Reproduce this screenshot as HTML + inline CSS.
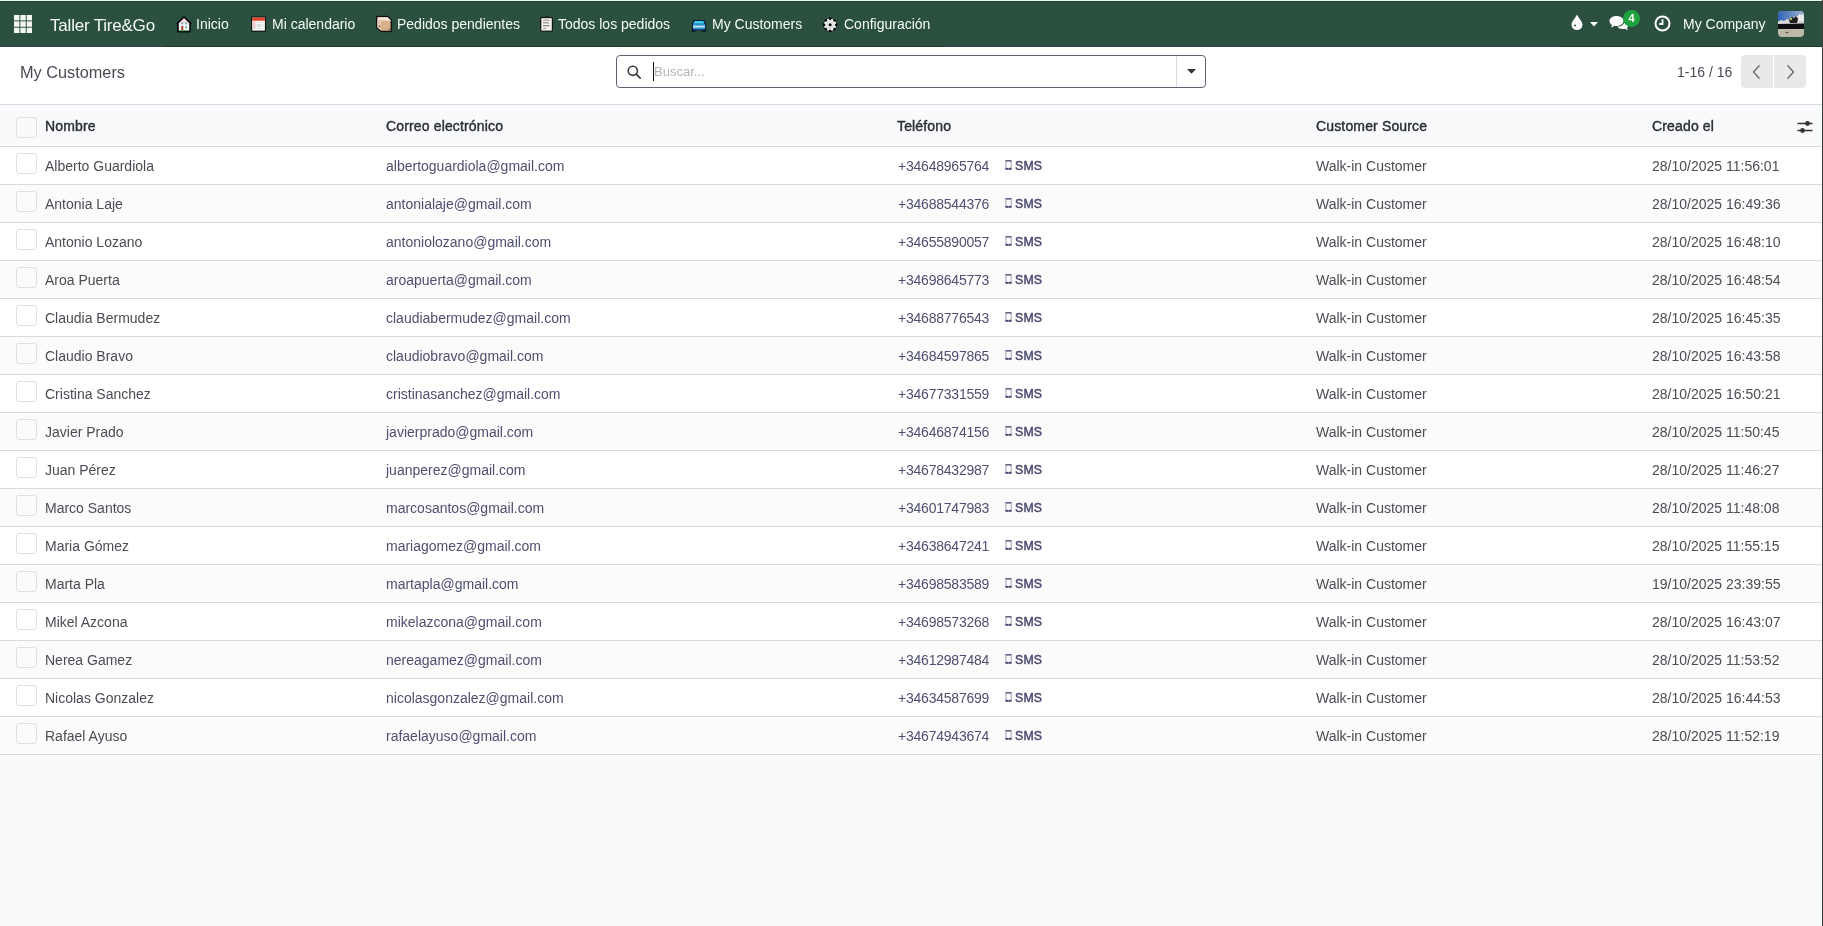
<!DOCTYPE html>
<html><head><meta charset="utf-8"><title>My Customers</title>
<style>
*{box-sizing:border-box}
html,body{margin:0;padding:0}
body{width:1823px;height:926px;position:relative;overflow:hidden;-webkit-font-smoothing:antialiased;background:#f9fafb;font-family:"Liberation Sans",sans-serif;font-size:14px;color:#374151}
.topline{position:absolute;left:0;top:0;width:1823px;height:1px;background:#e2f6ea}
.nav{position:absolute;left:0;top:1px;width:1822px;height:46px;background:#2b5040;border-top:1px solid #26443a;border-bottom:1px solid #36444a;color:#fff}
.nav .t{position:absolute;white-space:nowrap;line-height:20px;top:12px;font-size:14px;color:#f4fbf6}
.brand{font-size:17px !important;letter-spacing:-0.2px;top:14px !important}
.ico{position:absolute}
.cp{position:absolute;left:0;top:47px;width:1822px;height:58px;background:#fff;border-bottom:1px solid #dadbde}
.title{position:absolute;left:20px;top:15px;font-size:16.3px;line-height:20px;color:#474c54;white-space:nowrap}
.search{position:absolute;left:616px;top:8px;width:590px;height:33px;border:1px solid #625f70;border-radius:4px;background:#fff}
.search .sep{position:absolute;left:559px;top:0;width:1px;height:31px;background:#d8dadd}
.ph-text{position:absolute;left:37px;top:7px;color:#b3b4ba;font-size:13px;line-height:18px}
.caret{position:absolute;left:36px;top:6px;width:1px;height:19px;background:#111}
.pager-t{position:absolute;left:1677px;top:15px;line-height:20px;color:#454b54;white-space:nowrap}
.pbtn{position:absolute;top:8px;width:32px;height:33px;background:#e8e9eb}
.thead{position:absolute;left:0;top:105px;width:1822px;height:42px;background:#f9fafb;border-bottom:1px solid #dadbde}
.thead .h{position:absolute;top:1px;line-height:41px;font-weight:400;-webkit-text-stroke:0.4px #2a2d33;letter-spacing:0.15px;color:#2a2d33;white-space:nowrap}
.cb{position:absolute;left:16px;width:21px;height:21px;border:1px solid #dfe0e2;border-radius:3px;background:transparent}
.row{position:absolute;left:0;width:1822px;height:38px;border-bottom:1px solid #dadbde}
.row.odd{background:#fff}
.row.even{background:#fbfbfc}
.row .cb{top:6px}
.row .c{position:absolute;top:0px;line-height:38px;white-space:nowrap}
.name{left:45px;color:#4a4d53}
.email{left:386px;color:#4f4f70}
.phone{left:898px;color:#4f4f70;letter-spacing:-0.22px}
.src{left:1316px;color:#4a4d53}
.date{left:1652px;color:#4a4d53}
.sms{position:absolute;left:1005px;top:0px;line-height:38px;font-size:12.3px;font-weight:400;-webkit-text-stroke:0.45px #4a4870;letter-spacing:0.2px;color:#4a4870;white-space:nowrap}
.sms .ph{display:inline-block;vertical-align:0px;margin-right:3px}
.rborder{position:absolute;left:1822px;top:0;width:1px;height:926px;background:#3c3f3f}
</style></head>
<body><div id="wrap" style="position:absolute;left:0;top:0;width:1823px;height:926px;will-change:transform">
<div class="topline"></div>
<div class="nav">
  <svg class="ico" style="left:14px;top:13px" width="18.1" height="18.1" viewBox="0 0 18.1 18.1"><g fill="#f4f7f0"><rect x="0" y="0" width="5.4" height="5.4"/><rect x="6.35" y="0" width="5.4" height="5.4"/><rect x="12.7" y="0" width="5.4" height="5.4"/><rect x="0" y="6.35" width="5.4" height="5.4"/><rect x="6.35" y="6.35" width="5.4" height="5.4"/><rect x="12.7" y="6.35" width="5.4" height="5.4"/><rect x="0" y="12.7" width="5.4" height="5.4"/><rect x="6.35" y="12.7" width="5.4" height="5.4"/><rect x="12.7" y="12.7" width="5.4" height="5.4"/></g></svg>
  <span class="t brand" style="left:50px">Taller Tire&amp;Go</span>
  <!-- house -->
  <svg class="ico" style="left:174px;top:11px" width="20" height="20" viewBox="0 0 20 20">
    <path d="M10 3.6 L17.2 10.4 L16.2 10.9 L16.2 18.8 L3.6 18.8 L3.6 10.9 L2.8 10.4 Z" fill="#0a0a0a" stroke="#0a0a0a" stroke-width="1.2" stroke-linejoin="round"/>
    <path d="M10 5 L15.2 10.2 L4.8 10.2 Z" fill="#fcdbe6"/>
    <rect x="4.8" y="10" width="10.4" height="7.6" fill="#f2fbfb"/>
    <rect x="7.1" y="9.5" width="2.2" height="1.9" fill="#7fa3a8"/>
    <rect x="11" y="9.5" width="2.2" height="1.9" fill="#6fb3a8"/>
    <rect x="11" y="13.4" width="2.2" height="1.8" fill="#8aa5ad"/>
    <rect x="7.1" y="13" width="2.2" height="4.4" fill="#b0493a"/>
    <rect x="4.8" y="17" width="10.4" height="0.9" fill="#44b062"/>
  </svg>
  <span class="t" style="left:196px">Inicio</span>
  <!-- calendar -->
  <svg class="ico" style="left:248px;top:11px" width="20" height="20" viewBox="0 0 20 20">
    <rect x="3.2" y="3.6" width="14.7" height="15" fill="#0a0a0a"/>
    <rect x="4.2" y="4.6" width="12.7" height="13" fill="#fafafa"/>
    <rect x="4.2" y="4.6" width="12.7" height="3.2" fill="#e2472e"/>
    <rect x="5" y="8.5" width="2.6" height="7.5" fill="#f1c7cc"/>
    <g fill="#d7dbe8"><rect x="8.3" y="9" width="7.8" height="0.8"/><rect x="8.3" y="11" width="7.8" height="0.8"/><rect x="8.3" y="13" width="7.8" height="0.8"/><rect x="5" y="15" width="11" height="0.8"/></g>
    <rect x="9" y="12" width="4" height="1.8" fill="#cfe3c7"/>
  </svg>
  <span class="t" style="left:272px">Mi calendario</span>
  <!-- package -->
  <svg class="ico" style="left:373px;top:11px" width="20" height="20" viewBox="0 0 20 20">
    <path d="M3.6 3.3 L15 3.3 L18.6 7 L18.6 18.6 L7.8 18.6 L3.3 14.6 Z" fill="#0a0a0a" stroke="#0a0a0a" stroke-width="0.8" stroke-linejoin="round"/>
    <path d="M4.6 4.2 L14.6 4.2 L17.6 7.3 L17.6 17.7 L8.2 17.7 L4.3 14.2 Z" fill="#d8b089"/>
    <path d="M4.6 4.2 L14.6 4.2 L17.6 7.3 L17.6 8 L4.4 7.2 Z" fill="#f2e3d6"/>
    <path d="M4.4 7 L8 7.5 L8 17.5 L4.3 14.2 Z" fill="#e9c8b3"/>
    <circle cx="6.5" cy="13.3" r="0.7" fill="#3a2a1e"/>
    <circle cx="16.2" cy="16.3" r="0.8" fill="#6b5038"/>
  </svg>
  <span class="t" style="left:397px">Pedidos pendientes</span>
  <!-- clipboard -->
  <svg class="ico" style="left:536px;top:11px" width="20" height="20" viewBox="0 0 20 20">
    <rect x="4.3" y="4.2" width="12.5" height="14.4" rx="1" fill="#0a0a0a"/>
    <rect x="9" y="3.2" width="3.2" height="2" rx="0.6" fill="#0a0a0a"/>
    <rect x="5.3" y="5.2" width="10.5" height="12.4" fill="#f7f2ea"/>
    <path d="M8.5 6.9 L10.6 4.3 L12.6 6.9 Z" fill="#c9cfc4"/>
    <g fill="#8f8f92"><rect x="7" y="7.2" width="7" height="0.7"/><rect x="7" y="9.2" width="6.2" height="1.2"/><rect x="7" y="12" width="6.6" height="1.4"/><rect x="7" y="15" width="3" height="0.8"/></g>
  </svg>
  <span class="t" style="left:558px">Todos los pedidos</span>
  <!-- car -->
  <svg class="ico" style="left:688px;top:11px" width="20" height="20" viewBox="0 0 20 20">
    <path d="M5.2 7.3 Q5.6 6.9 6.4 6.9 L15.4 6.9 Q16.2 6.9 16.6 7.5 L17.3 9.5 Q18.2 10.2 18.2 11.5 L18.2 18.8 L14.2 18.8 L14.2 17.6 L7.6 17.6 L7.6 18.8 L3.9 18.8 L3.9 11.5 Q3.9 10.2 4.6 9.5 Z" fill="#061a30"/>
    <path d="M6.6 7.9 L15.3 7.9 L16.5 10.8 L5.3 10.8 Z" fill="#3fcdf2"/>
    <rect x="5" y="10.8" width="12.2" height="5.6" rx="0.8" fill="#2a8ed0"/>
    <rect x="5.4" y="12.7" width="11.4" height="1.8" fill="#c8e8f5"/>
    <rect x="5.4" y="12.7" width="1.6" height="1.8" fill="#b6f0f0"/>
  </svg>
  <span class="t" style="left:712px">My Customers</span>
  <!-- gear -->
  <svg class="ico" style="left:820px;top:12px" width="20" height="20" viewBox="0 0 20 20">
    <g transform="translate(10.15 10.8)">
      <g fill="#0a0a0a"><circle r="5.9"/><rect x="-1.9" y="-7.2" width="3.8" height="14.4" rx="0.8" transform="rotate(0)"/><rect x="-1.9" y="-7.2" width="3.8" height="14.4" rx="0.8" transform="rotate(45)"/><rect x="-1.9" y="-7.2" width="3.8" height="14.4" rx="0.8" transform="rotate(90)"/><rect x="-1.9" y="-7.2" width="3.8" height="14.4" rx="0.8" transform="rotate(135)"/></g>
      <g fill="#eef0ee"><circle r="4.9"/><rect x="-1.1" y="-6.2" width="2.2" height="12.4" rx="0.5" transform="rotate(22.5)"/><rect x="-1.1" y="-6.2" width="2.2" height="12.4" rx="0.5" transform="rotate(67.5)"/><rect x="-1.1" y="-6.2" width="2.2" height="12.4" rx="0.5" transform="rotate(112.5)"/><rect x="-1.1" y="-6.2" width="2.2" height="12.4" rx="0.5" transform="rotate(157.5)"/></g>
      <circle r="3.3" fill="none" stroke="#c9c6cb" stroke-width="0.8"/>
      <circle r="1.5" fill="#050505"/>
    </g>
  </svg>
  <span class="t" style="left:844px">Configuración</span>

  <!-- right side -->
  <svg class="ico" style="left:1571px;top:12px" width="12" height="16" viewBox="0 0 12 16">
    <path d="M6 0.5 C7.5 4 11.5 7.5 11.5 10.5 A5.5 5.5 0 0 1 0.5 10.5 C0.5 7.5 4.5 4 6 0.5 Z" fill="#fff"/>
    <circle cx="4" cy="11.5" r="1" fill="#2b5040"/>
  </svg>
  <svg class="ico" style="left:1590px;top:20px" width="8" height="5" viewBox="0 0 8 5"><path d="M0 0 L8 0 L4 4.6 Z" fill="#fff"/></svg>
  <svg class="ico" style="left:1609px;top:13px" width="20" height="16" viewBox="0 0 20 16">
    <path d="M7.5 1 C11.5 1 14.5 3.2 14.5 6 C14.5 8.8 11.5 11 7.5 11 C6.8 11 6.2 10.9 5.6 10.8 L2 12.8 L3 10 C1.5 9 0.5 7.6 0.5 6 C0.5 3.2 3.5 1 7.5 1 Z" fill="#fff"/>
    <path d="M15.5 5.5 C18 6.2 19.5 8 19.5 9.8 C19.5 11 18.9 12 18 12.8 L18.8 15.2 L15.8 13.7 C15.2 13.9 14.6 14 14 14 C11.5 14 9.5 13 8.5 11.7 C12.8 11.5 15.7 9.2 15.5 5.5 Z" fill="#fff"/>
  </svg>
  <div style="position:absolute;left:1623px;top:8px;width:17px;height:17px;border-radius:50%;background:#1fa33f;color:#fff;font-size:11px;font-weight:700;line-height:17px;text-align:center">4</div>
  <svg class="ico" style="left:1654px;top:13px" width="17" height="17" viewBox="0 0 17 17">
    <circle cx="8.5" cy="8.5" r="7" fill="none" stroke="#fff" stroke-width="2"/>
    <path d="M8.5 4.2 L8.5 9 L5.3 9" fill="none" stroke="#fff" stroke-width="1.8"/>
  </svg>
  <span class="t" style="left:1683px">My Company</span>
  <svg class="ico" style="left:1778px;top:9px" width="26" height="26" viewBox="0 0 26 26">
    <defs><clipPath id="av"><rect x="0" y="0" width="26" height="26" rx="4"/></clipPath>
    <linearGradient id="sky" x1="0" x2="1" y1="0" y2="0"><stop offset="0" stop-color="#2f63b8"/><stop offset="1" stop-color="#9db4d2"/></linearGradient>
    <linearGradient id="grd" x1="0" x2="0" y1="0" y2="1"><stop offset="0" stop-color="#cfc6b2"/><stop offset="1" stop-color="#b9b7a6"/></linearGradient></defs>
    <g clip-path="url(#av)">
      <rect width="26" height="26" fill="url(#grd)"/>
      <rect width="26" height="10" fill="url(#sky)"/>
      <path d="M0 11 L3 9 L6 10 L9 8 L13 9 L15 6 L19 5 L22 4 L26 5 L26 14 L0 14 Z" fill="#d9d6d8"/>
      <path d="M11 9 L14 6 L16 7 L18 5 L20 8 L19 12 L12 12 Z" fill="#1d1d22"/>
      <rect x="21" y="3" width="1.6" height="7" fill="#f4f4f4"/><rect x="23.5" y="3.5" width="2" height="6.5" fill="#f0f0f0"/>
      <circle cx="13" cy="8" r="1.2" fill="#b6c44a"/>
      <path d="M0 13 L26 12.5 L26 18 L0 18 Z" fill="#0e0e12"/>
      <ellipse cx="9" cy="21.5" rx="1.6" ry="0.7" fill="#5e4a38"/>
    </g>
  </svg>
</div>

<div style="position:absolute;left:163px;top:46px;width:781px;height:1px;background:#1f3b2c"></div>
<div style="position:absolute;left:1560px;top:46px;width:262px;height:1px;background:#1f3b2c"></div>
<div class="cp">
  <span class="title">My Customers</span>
  <div class="search">
    <svg style="position:absolute;left:10px;top:9px" width="15" height="15" viewBox="0 0 15 15">
      <circle cx="5.8" cy="5.8" r="4.6" fill="none" stroke="#3b3b3b" stroke-width="1.6"/>
      <path d="M9.2 9.2 L13.2 13.2" stroke="#3b3b3b" stroke-width="1.7" stroke-linecap="round"/>
    </svg>
    <span class="caret"></span>
    <span class="ph-text">Buscar...</span>
    <span class="sep"></span>
    <svg style="position:absolute;left:570px;top:13px" width="9" height="5" viewBox="0 0 9 5"><path d="M0 0 L9 0 L4.5 4.8 Z" fill="#333"/></svg>
  </div>
  <span class="pager-t">1-16 / 16</span>
  <div class="pbtn" style="left:1741px;border-radius:4px 0 0 4px">
    <svg style="position:absolute;left:11px;top:10px" width="9" height="14" viewBox="0 0 9 14"><path d="M7.5 0.3 L1.5 7 L7.5 13.7" fill="none" stroke="#6b6b6b" stroke-width="1.4"/></svg>
  </div>
  <div class="pbtn" style="left:1774px;border-radius:0 4px 4px 0">
    <svg style="position:absolute;left:12px;top:10px" width="9" height="14" viewBox="0 0 9 14"><path d="M1.5 0.3 L7.5 7 L1.5 13.7" fill="none" stroke="#6b6b6b" stroke-width="1.4"/></svg>
  </div>
</div>

<div class="thead">
  <span class="cb" style="top:12px"></span>
  <span class="h" style="left:45px">Nombre</span>
  <span class="h" style="left:386px">Correo electrónico</span>
  <span class="h" style="left:897px">Teléfono</span>
  <span class="h" style="left:1316px">Customer Source</span>
  <span class="h" style="left:1652px">Creado el</span>
  <svg style="position:absolute;left:1797px;top:15px" width="16" height="15" viewBox="0 0 16 15">
    <path d="M0.5 3.5 L15.5 3.5 M0.5 10.5 L15.5 10.5" stroke="#333" stroke-width="1.3"/>
    <circle cx="10.5" cy="3.5" r="2.4" fill="#333"/>
    <circle cx="5.5" cy="10.5" r="2.4" fill="#333"/>
  </svg>
</div>

<div class="row odd" style="top:147px"><span class="cb"></span><span class="c name">Alberto Guardiola</span><span class="c email">albertoguardiola@gmail.com</span><span class="c phone">+34648965764</span><span class="sms"><svg class="ph" width="7" height="10" viewBox="0 0 7 10"><rect x="0.5" y="0.3" width="6" height="9.4" rx="0.6" fill="#8d8aa8"/><rect x="1.3" y="1.3" width="4.4" height="6.6" fill="#fff"/><rect x="0.5" y="0.3" width="6" height="1.1" fill="currentColor"/><rect x="0.5" y="7.9" width="2.6" height="1.8" fill="currentColor"/><rect x="3.9" y="7.9" width="2.6" height="1.8" fill="currentColor"/></svg>SMS</span><span class="c src">Walk-in Customer</span><span class="c date">28/10/2025 11:56:01</span></div>
<div class="row even" style="top:185px"><span class="cb"></span><span class="c name">Antonia Laje</span><span class="c email">antonialaje@gmail.com</span><span class="c phone">+34688544376</span><span class="sms"><svg class="ph" width="7" height="10" viewBox="0 0 7 10"><rect x="0.5" y="0.3" width="6" height="9.4" rx="0.6" fill="#8d8aa8"/><rect x="1.3" y="1.3" width="4.4" height="6.6" fill="#fff"/><rect x="0.5" y="0.3" width="6" height="1.1" fill="currentColor"/><rect x="0.5" y="7.9" width="2.6" height="1.8" fill="currentColor"/><rect x="3.9" y="7.9" width="2.6" height="1.8" fill="currentColor"/></svg>SMS</span><span class="c src">Walk-in Customer</span><span class="c date">28/10/2025 16:49:36</span></div>
<div class="row odd" style="top:223px"><span class="cb"></span><span class="c name">Antonio Lozano</span><span class="c email">antoniolozano@gmail.com</span><span class="c phone">+34655890057</span><span class="sms"><svg class="ph" width="7" height="10" viewBox="0 0 7 10"><rect x="0.5" y="0.3" width="6" height="9.4" rx="0.6" fill="#8d8aa8"/><rect x="1.3" y="1.3" width="4.4" height="6.6" fill="#fff"/><rect x="0.5" y="0.3" width="6" height="1.1" fill="currentColor"/><rect x="0.5" y="7.9" width="2.6" height="1.8" fill="currentColor"/><rect x="3.9" y="7.9" width="2.6" height="1.8" fill="currentColor"/></svg>SMS</span><span class="c src">Walk-in Customer</span><span class="c date">28/10/2025 16:48:10</span></div>
<div class="row even" style="top:261px"><span class="cb"></span><span class="c name">Aroa Puerta</span><span class="c email">aroapuerta@gmail.com</span><span class="c phone">+34698645773</span><span class="sms"><svg class="ph" width="7" height="10" viewBox="0 0 7 10"><rect x="0.5" y="0.3" width="6" height="9.4" rx="0.6" fill="#8d8aa8"/><rect x="1.3" y="1.3" width="4.4" height="6.6" fill="#fff"/><rect x="0.5" y="0.3" width="6" height="1.1" fill="currentColor"/><rect x="0.5" y="7.9" width="2.6" height="1.8" fill="currentColor"/><rect x="3.9" y="7.9" width="2.6" height="1.8" fill="currentColor"/></svg>SMS</span><span class="c src">Walk-in Customer</span><span class="c date">28/10/2025 16:48:54</span></div>
<div class="row odd" style="top:299px"><span class="cb"></span><span class="c name">Claudia Bermudez</span><span class="c email">claudiabermudez@gmail.com</span><span class="c phone">+34688776543</span><span class="sms"><svg class="ph" width="7" height="10" viewBox="0 0 7 10"><rect x="0.5" y="0.3" width="6" height="9.4" rx="0.6" fill="#8d8aa8"/><rect x="1.3" y="1.3" width="4.4" height="6.6" fill="#fff"/><rect x="0.5" y="0.3" width="6" height="1.1" fill="currentColor"/><rect x="0.5" y="7.9" width="2.6" height="1.8" fill="currentColor"/><rect x="3.9" y="7.9" width="2.6" height="1.8" fill="currentColor"/></svg>SMS</span><span class="c src">Walk-in Customer</span><span class="c date">28/10/2025 16:45:35</span></div>
<div class="row even" style="top:337px"><span class="cb"></span><span class="c name">Claudio Bravo</span><span class="c email">claudiobravo@gmail.com</span><span class="c phone">+34684597865</span><span class="sms"><svg class="ph" width="7" height="10" viewBox="0 0 7 10"><rect x="0.5" y="0.3" width="6" height="9.4" rx="0.6" fill="#8d8aa8"/><rect x="1.3" y="1.3" width="4.4" height="6.6" fill="#fff"/><rect x="0.5" y="0.3" width="6" height="1.1" fill="currentColor"/><rect x="0.5" y="7.9" width="2.6" height="1.8" fill="currentColor"/><rect x="3.9" y="7.9" width="2.6" height="1.8" fill="currentColor"/></svg>SMS</span><span class="c src">Walk-in Customer</span><span class="c date">28/10/2025 16:43:58</span></div>
<div class="row odd" style="top:375px"><span class="cb"></span><span class="c name">Cristina Sanchez</span><span class="c email">cristinasanchez@gmail.com</span><span class="c phone">+34677331559</span><span class="sms"><svg class="ph" width="7" height="10" viewBox="0 0 7 10"><rect x="0.5" y="0.3" width="6" height="9.4" rx="0.6" fill="#8d8aa8"/><rect x="1.3" y="1.3" width="4.4" height="6.6" fill="#fff"/><rect x="0.5" y="0.3" width="6" height="1.1" fill="currentColor"/><rect x="0.5" y="7.9" width="2.6" height="1.8" fill="currentColor"/><rect x="3.9" y="7.9" width="2.6" height="1.8" fill="currentColor"/></svg>SMS</span><span class="c src">Walk-in Customer</span><span class="c date">28/10/2025 16:50:21</span></div>
<div class="row even" style="top:413px"><span class="cb"></span><span class="c name">Javier Prado</span><span class="c email">javierprado@gmail.com</span><span class="c phone">+34646874156</span><span class="sms"><svg class="ph" width="7" height="10" viewBox="0 0 7 10"><rect x="0.5" y="0.3" width="6" height="9.4" rx="0.6" fill="#8d8aa8"/><rect x="1.3" y="1.3" width="4.4" height="6.6" fill="#fff"/><rect x="0.5" y="0.3" width="6" height="1.1" fill="currentColor"/><rect x="0.5" y="7.9" width="2.6" height="1.8" fill="currentColor"/><rect x="3.9" y="7.9" width="2.6" height="1.8" fill="currentColor"/></svg>SMS</span><span class="c src">Walk-in Customer</span><span class="c date">28/10/2025 11:50:45</span></div>
<div class="row odd" style="top:451px"><span class="cb"></span><span class="c name">Juan Pérez</span><span class="c email">juanperez@gmail.com</span><span class="c phone">+34678432987</span><span class="sms"><svg class="ph" width="7" height="10" viewBox="0 0 7 10"><rect x="0.5" y="0.3" width="6" height="9.4" rx="0.6" fill="#8d8aa8"/><rect x="1.3" y="1.3" width="4.4" height="6.6" fill="#fff"/><rect x="0.5" y="0.3" width="6" height="1.1" fill="currentColor"/><rect x="0.5" y="7.9" width="2.6" height="1.8" fill="currentColor"/><rect x="3.9" y="7.9" width="2.6" height="1.8" fill="currentColor"/></svg>SMS</span><span class="c src">Walk-in Customer</span><span class="c date">28/10/2025 11:46:27</span></div>
<div class="row even" style="top:489px"><span class="cb"></span><span class="c name">Marco Santos</span><span class="c email">marcosantos@gmail.com</span><span class="c phone">+34601747983</span><span class="sms"><svg class="ph" width="7" height="10" viewBox="0 0 7 10"><rect x="0.5" y="0.3" width="6" height="9.4" rx="0.6" fill="#8d8aa8"/><rect x="1.3" y="1.3" width="4.4" height="6.6" fill="#fff"/><rect x="0.5" y="0.3" width="6" height="1.1" fill="currentColor"/><rect x="0.5" y="7.9" width="2.6" height="1.8" fill="currentColor"/><rect x="3.9" y="7.9" width="2.6" height="1.8" fill="currentColor"/></svg>SMS</span><span class="c src">Walk-in Customer</span><span class="c date">28/10/2025 11:48:08</span></div>
<div class="row odd" style="top:527px"><span class="cb"></span><span class="c name">Maria Gómez</span><span class="c email">mariagomez@gmail.com</span><span class="c phone">+34638647241</span><span class="sms"><svg class="ph" width="7" height="10" viewBox="0 0 7 10"><rect x="0.5" y="0.3" width="6" height="9.4" rx="0.6" fill="#8d8aa8"/><rect x="1.3" y="1.3" width="4.4" height="6.6" fill="#fff"/><rect x="0.5" y="0.3" width="6" height="1.1" fill="currentColor"/><rect x="0.5" y="7.9" width="2.6" height="1.8" fill="currentColor"/><rect x="3.9" y="7.9" width="2.6" height="1.8" fill="currentColor"/></svg>SMS</span><span class="c src">Walk-in Customer</span><span class="c date">28/10/2025 11:55:15</span></div>
<div class="row even" style="top:565px"><span class="cb"></span><span class="c name">Marta Pla</span><span class="c email">martapla@gmail.com</span><span class="c phone">+34698583589</span><span class="sms"><svg class="ph" width="7" height="10" viewBox="0 0 7 10"><rect x="0.5" y="0.3" width="6" height="9.4" rx="0.6" fill="#8d8aa8"/><rect x="1.3" y="1.3" width="4.4" height="6.6" fill="#fff"/><rect x="0.5" y="0.3" width="6" height="1.1" fill="currentColor"/><rect x="0.5" y="7.9" width="2.6" height="1.8" fill="currentColor"/><rect x="3.9" y="7.9" width="2.6" height="1.8" fill="currentColor"/></svg>SMS</span><span class="c src">Walk-in Customer</span><span class="c date">19/10/2025 23:39:55</span></div>
<div class="row odd" style="top:603px"><span class="cb"></span><span class="c name">Mikel Azcona</span><span class="c email">mikelazcona@gmail.com</span><span class="c phone">+34698573268</span><span class="sms"><svg class="ph" width="7" height="10" viewBox="0 0 7 10"><rect x="0.5" y="0.3" width="6" height="9.4" rx="0.6" fill="#8d8aa8"/><rect x="1.3" y="1.3" width="4.4" height="6.6" fill="#fff"/><rect x="0.5" y="0.3" width="6" height="1.1" fill="currentColor"/><rect x="0.5" y="7.9" width="2.6" height="1.8" fill="currentColor"/><rect x="3.9" y="7.9" width="2.6" height="1.8" fill="currentColor"/></svg>SMS</span><span class="c src">Walk-in Customer</span><span class="c date">28/10/2025 16:43:07</span></div>
<div class="row even" style="top:641px"><span class="cb"></span><span class="c name">Nerea Gamez</span><span class="c email">nereagamez@gmail.com</span><span class="c phone">+34612987484</span><span class="sms"><svg class="ph" width="7" height="10" viewBox="0 0 7 10"><rect x="0.5" y="0.3" width="6" height="9.4" rx="0.6" fill="#8d8aa8"/><rect x="1.3" y="1.3" width="4.4" height="6.6" fill="#fff"/><rect x="0.5" y="0.3" width="6" height="1.1" fill="currentColor"/><rect x="0.5" y="7.9" width="2.6" height="1.8" fill="currentColor"/><rect x="3.9" y="7.9" width="2.6" height="1.8" fill="currentColor"/></svg>SMS</span><span class="c src">Walk-in Customer</span><span class="c date">28/10/2025 11:53:52</span></div>
<div class="row odd" style="top:679px"><span class="cb"></span><span class="c name">Nicolas Gonzalez</span><span class="c email">nicolasgonzalez@gmail.com</span><span class="c phone">+34634587699</span><span class="sms"><svg class="ph" width="7" height="10" viewBox="0 0 7 10"><rect x="0.5" y="0.3" width="6" height="9.4" rx="0.6" fill="#8d8aa8"/><rect x="1.3" y="1.3" width="4.4" height="6.6" fill="#fff"/><rect x="0.5" y="0.3" width="6" height="1.1" fill="currentColor"/><rect x="0.5" y="7.9" width="2.6" height="1.8" fill="currentColor"/><rect x="3.9" y="7.9" width="2.6" height="1.8" fill="currentColor"/></svg>SMS</span><span class="c src">Walk-in Customer</span><span class="c date">28/10/2025 16:44:53</span></div>
<div class="row even" style="top:717px"><span class="cb"></span><span class="c name">Rafael Ayuso</span><span class="c email">rafaelayuso@gmail.com</span><span class="c phone">+34674943674</span><span class="sms"><svg class="ph" width="7" height="10" viewBox="0 0 7 10"><rect x="0.5" y="0.3" width="6" height="9.4" rx="0.6" fill="#8d8aa8"/><rect x="1.3" y="1.3" width="4.4" height="6.6" fill="#fff"/><rect x="0.5" y="0.3" width="6" height="1.1" fill="currentColor"/><rect x="0.5" y="7.9" width="2.6" height="1.8" fill="currentColor"/><rect x="3.9" y="7.9" width="2.6" height="1.8" fill="currentColor"/></svg>SMS</span><span class="c src">Walk-in Customer</span><span class="c date">28/10/2025 11:52:19</span></div>

<div class="rborder"></div>
</div></body></html>
